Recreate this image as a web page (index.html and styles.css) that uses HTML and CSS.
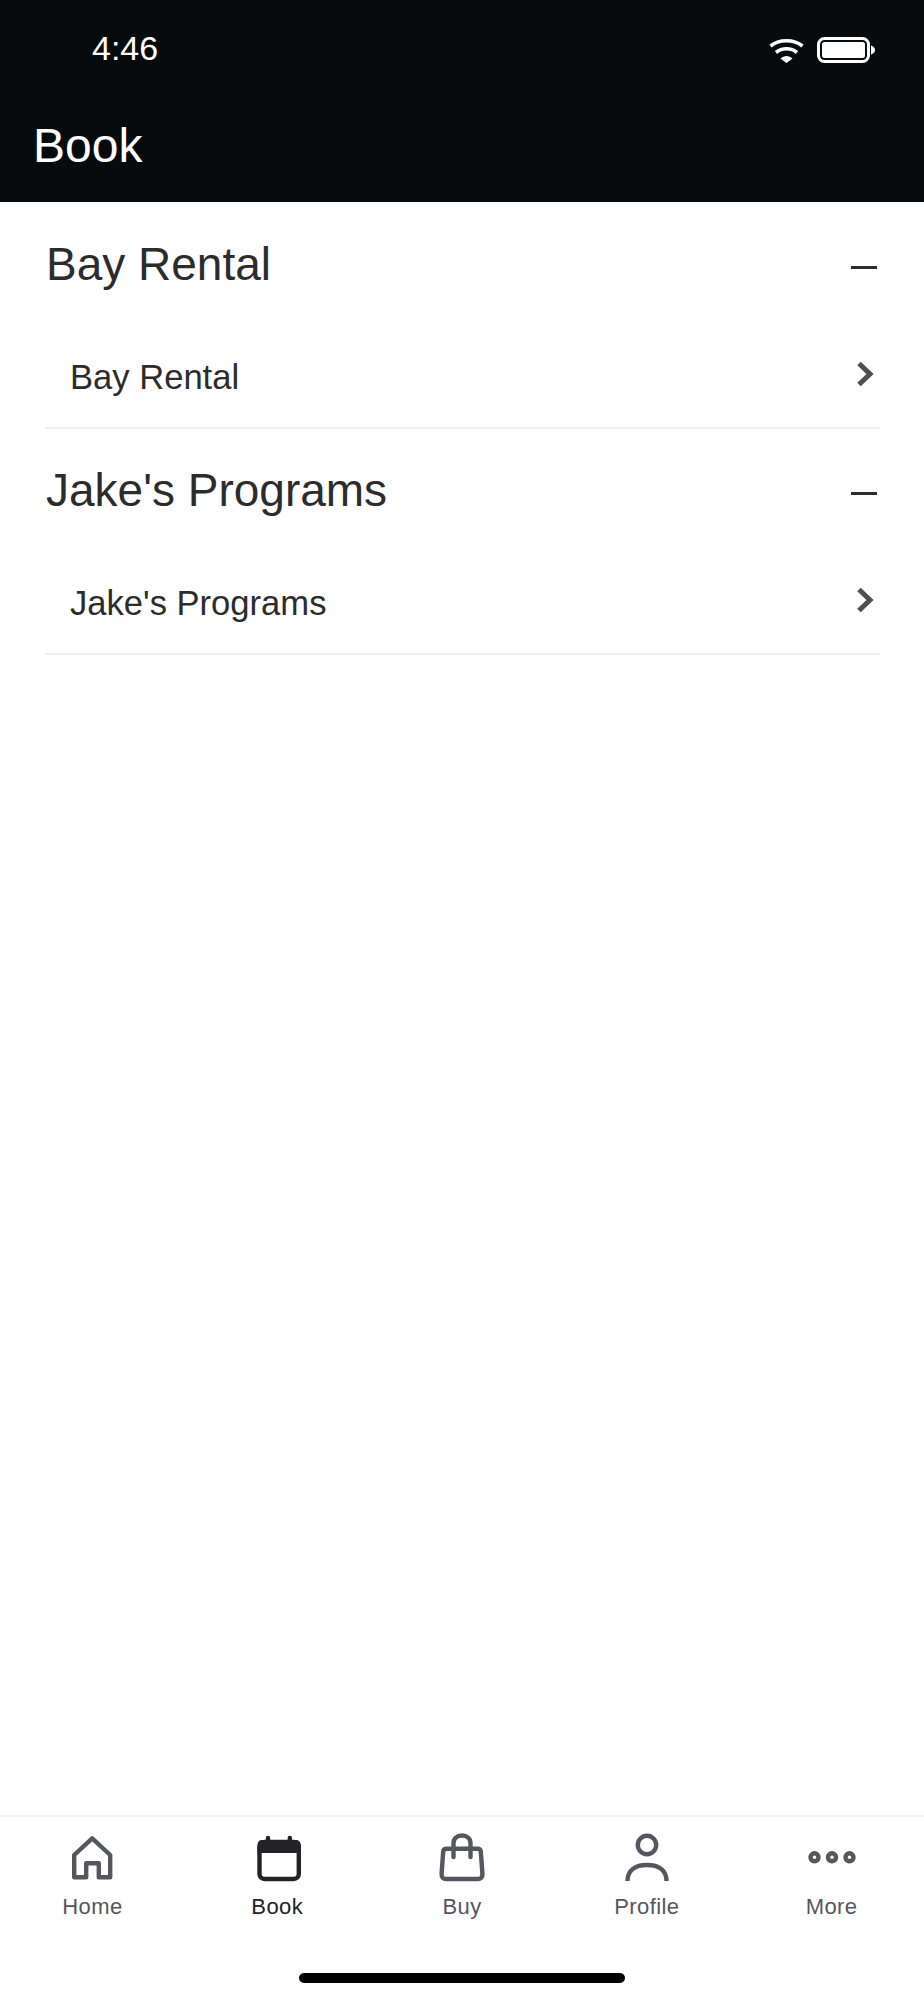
FILE: index.html
```html
<!DOCTYPE html>
<html lang="en">
<head>
  <meta charset="UTF-8" />
  <meta name="viewport" content="width=device-width, initial-scale=1.0" />
  <title>Book</title>
  <link rel="stylesheet" href="styles.css">
</head>
<body>
  <div class="app">
    <header class="top">
      <div class="status">
        <span class="time">4:46</span>
        <div class="status-icons">
          <svg class="wifi" width="35" height="25" viewBox="0 0 35 25" fill="none" stroke="#fff" stroke-width="3.6">
            <path d="M1.5 8C10 1 25 1 33.5 8"/>
            <path d="M7 14.5C13 9.5 22 9.5 28 14.5"/>
            <path d="M11.5 20.5C15 17 20 17 23.5 20.5L17.5 25Z" fill="#fff" stroke="none"/>
          </svg>
          <svg class="battery" width="58" height="26" viewBox="0 0 58 26" fill="none">
            <rect x="1.5" y="1.5" width="50" height="23" rx="6" stroke="#fff" stroke-width="3"/>
            <rect x="5" y="5" width="43" height="16" rx="2.5" fill="#fff"/>
            <path d="M54 8.5C56.5 9 58 11 58 13C58 15 56.5 17 54 17.5Z" fill="#fff"/>
          </svg>
        </div>
      </div>
      <h1 class="page-title">Book</h1>
    </header>

    <main class="list">
      <section class="group">
        <div class="group-head">
          <h2>Bay Rental</h2>
          <span class="minus"></span>
        </div>
        <div class="row">
          <span class="row-name">Bay Rental</span>
          <svg class="chevron" width="18" height="26" viewBox="0 0 18 26" fill="none" stroke="#4f4f4f" stroke-width="5">
            <path d="M3 2.5L14 13L3 23.5"/>
          </svg>
        </div>
      </section>
      <section class="group">
        <div class="group-head">
          <h2>Jake's Programs</h2>
          <span class="minus"></span>
        </div>
        <div class="row">
          <span class="row-name">Jake's Programs</span>
          <svg class="chevron" width="18" height="26" viewBox="0 0 18 26" fill="none" stroke="#4f4f4f" stroke-width="5">
            <path d="M3 2.5L14 13L3 23.5"/>
          </svg>
        </div>
      </section>
    </main>

    <nav class="tabs">
      <div class="tab">
        <svg width="48" height="52" viewBox="0 0 48 52" fill="none" stroke="#55565e" stroke-width="4.4" stroke-linejoin="round">
          <path d="M24.2 8.3L42.2 25V47.3H30.8V33.3H18.2V47.3H6.2V25Z"/>
        </svg>
        <span>Home</span>
      </div>
      <div class="tab active">
        <svg width="48" height="52" viewBox="0 0 48 52" fill="none" stroke="#232327" stroke-width="4.4">
          <rect x="6.5" y="12" width="39.3" height="37" rx="5"/>
          <path d="M9 10H43C46 10 47.8 12 47.8 15V23H4.5V15C4.5 12 6 10 9 10Z" fill="#232327" stroke="none"/>
          <path d="M15 8V12M36.8 8V12" stroke-linecap="round"/>
        </svg>
        <span>Book</span>
      </div>
      <div class="tab">
        <svg width="48" height="52" viewBox="0 0 48 52" fill="none" stroke="#55565e" stroke-width="4.4" stroke-linecap="round">
          <path d="M8.5 18.7H39.5C41.5 18.7 42.6 19.5 42.8 21.5L44.4 43.5C44.7 47.2 42.8 49 39.5 49H8.5C5.2 49 3.3 47.2 3.6 43.5L5.2 21.5C5.4 19.5 6.5 18.7 8.5 18.7Z"/>
          <path d="M15.5 27V13.5C15.5 8.5 19 5.5 24 5.5C29 5.5 32.5 8.5 32.5 13.5V27"/>
        </svg>
        <span>Buy</span>
      </div>
      <div class="tab">
        <svg width="48" height="52" viewBox="0 0 48 52" fill="none" stroke="#55565e" stroke-width="4.4">
          <circle cx="24" cy="15" r="9.2"/>
          <path d="M4.5 51C4.5 40 12 35 24 35C36 35 43.5 40 43.5 51"/>
        </svg>
        <span>Profile</span>
      </div>
      <div class="tab">
        <svg width="48" height="52" viewBox="0 0 48 52" fill="none" stroke="#55565e" stroke-width="4.4">
          <circle cx="6.5" cy="27.3" r="4"/>
          <circle cx="24" cy="27.3" r="4"/>
          <circle cx="41.5" cy="27.3" r="4"/>
        </svg>
        <span>More</span>
      </div>
    </nav>
    <div class="home-bar-wrap"><div class="home-bar"></div></div>
  </div>
</body>
</html>
```

FILE: styles.css
```css
* {
  box-sizing: border-box;
}
body {
  margin: 0;
  background: white;
  font-family: "Liberation Sans", Arial, sans-serif;
}
.app {
  height: 2000px;
  display: flex;
  flex-direction: column;
}
.top {
  height: 202px;
  background: #070b0e;
  color: white;
  padding: 0 35px 0 33px;
  flex-shrink: 0;
  overflow: hidden;
}
.status {
  display: flex;
  justify-content: space-between;
  align-items: center;
  height: 48px;
  margin-top: 24px;
  padding-left: 59px;
  padding-right: 14px;
}
.time {
  font-size: 34px;
}
.status-icons {
  display: flex;
  align-items: center;
  gap: 13px;
  padding-top: 4px;
}
.page-title {
  margin: 47px 0 0;
  font-size: 48px;
  line-height: 54px;
  font-weight: normal;
}
.list {
  flex: 1;
  padding: 1px 44px 0 45px;
}
.group-head {
  display: flex;
  justify-content: space-between;
  align-items: center;
  height: 124px;
  padding: 0 3px 2px 1px;
  color: #2c2c2c;
}
.group-head h2 {
  margin: 0;
  font-size: 46px;
  font-weight: normal;
}
.minus {
  width: 26px;
  height: 3px;
  background: #2c2c2c;
  margin-top: 6px;
}
.row {
  display: flex;
  justify-content: space-between;
  align-items: center;
  height: 102px;
  padding: 0 6px 0 25px;
  border-bottom: 2px solid #eeeeee;
  color: #2c2c2c;
}
.row-name {
  font-size: 34.6px;
}
.chevron {
  margin-bottom: 6px;
}
.tabs {
  display: flex;
  height: 132px;
  border-top: 2px solid #f3f3f3;
  padding-top: 13px;
  flex-shrink: 0;
}
.tab {
  flex: 1;
  display: flex;
  flex-direction: column;
  align-items: center;
  color: #55565e;
  font-size: 22px;
  letter-spacing: 0.4px;
}
.tab span {
  margin-top: 12px;
}
.tab.active {
  color: #232327;
}
.home-bar-wrap {
  height: 53px;
  flex-shrink: 0;
  display: flex;
  justify-content: center;
}
.home-bar {
  width: 326px;
  height: 10px;
  border-radius: 5px;
  background: black;
  margin-top: 26px;
}
```
